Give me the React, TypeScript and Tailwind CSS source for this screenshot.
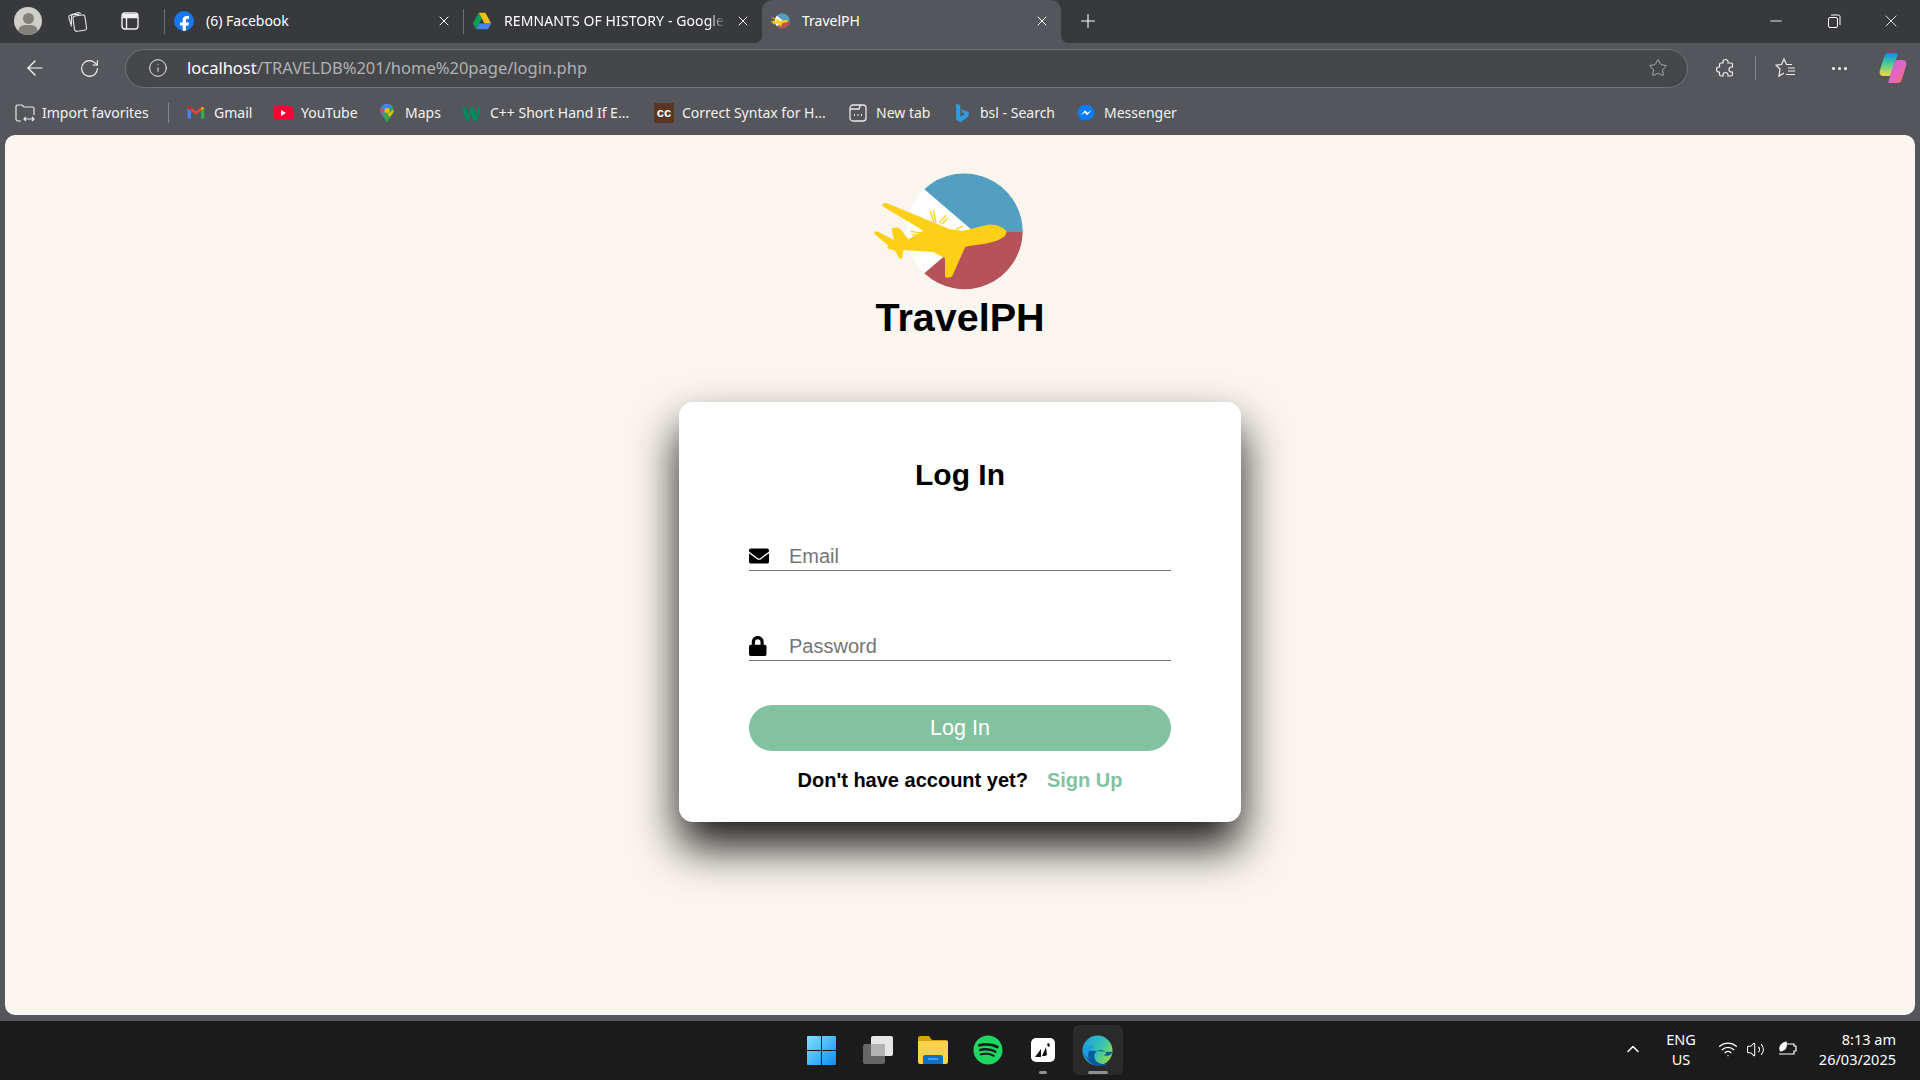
import React from 'react';
import { ArrowLeft, RotateCw, Info, Star, X, Plus, Minus, Wifi, Volume2, ChevronUp } from 'lucide-react';
import { FaEnvelope, FaLock, FaSpotify, FaFacebookF } from 'react-icons/fa';

const Logo = ({ className, viewBox }: { className: string; viewBox: string }) => (
  <svg className={className} viewBox={viewBox}>
    <path d="M253 88 A175 175 0 0 0 253 340 L400 214 Z" fill="#ffffff" />
    <path d="M253 88 A175 175 0 0 1 548 214 L400 214 Z" fill="#529fc1" />
    <path d="M548 214 A175 175 0 0 1 253 340 L400 214 Z" fill="#b5525a" />
    <g stroke="#fdd017" strokeWidth="4">
      <path d="M270 152 L282 190 M280 150 L288 190" />
      <path d="M298 188 L318 166 M306 192 L324 174" />
      <path d="M212 214 L250 220 M214 224 L250 228" />
      <path d="M348 208 L368 198" />
    </g>
    <path
      d="M498 212 C490 204 470 192 445 194 C420 198 395 208 365 212 L330 208 L140 129 C130 128 125 133 128 139 L250 212 L205 238 L180 206 C172 200 156 202 155 208 L162 240 L115 215 C105 213 100 218 104 222 L146 258 L140 264 L165 272 L178 296 C184 298 190 292 188 284 L190 270 L280 276 L315 295 L315 350 C320 355 332 353 337 348 L376 260 C420 254 470 248 490 232 C498 226 500 218 498 212 Z"
      fill="#fdd017"
    />
  </svg>
);

const FacebookIcon = () => (
  <span className="w-5 h-5 rounded-full bg-[#1877f2] flex items-end justify-center overflow-hidden text-white">
    <FaFacebookF size={17} className="translate-y-[2px]" />
  </span>
);

const DriveIcon = () => (
  <svg className="w-5 h-5" viewBox="0 0 24 24">
    <path d="M8 2h8l7 13h-8z" fill="#fbbc04" />
    <path d="M8 2l4 7-7 13-4-7z" fill="#0f9d58" />
    <path d="M5 22l4-7h14l-4 7z" fill="#4285f4" />
  </svg>
);

const GmailIcon = () => (
  <svg className="w-5 h-5" viewBox="0 0 24 24">
    <path d="M2 6v13h4V9z" fill="#4285f4" />
    <path d="M22 6v13h-4V9z" fill="#34a853" />
    <path d="M2 6l10 8 10-8-2-2-8 6-8-6z" fill="#ea4335" />
    <path d="M18 5l4 1-4 3z" fill="#fbbc04" />
    <path d="M2 6l2-2 2 1v4z" fill="#c5221f" />
  </svg>
);

const YoutubeIcon = () => (
  <span className="w-5 h-[14px] rounded-[4px] bg-[#ff0033] flex items-center justify-center">
    <span className="w-0 h-0 border-y-[3px] border-y-transparent border-l-[5px] border-l-white" />
  </span>
);

const MapsIcon = () => (
  <svg className="w-5 h-5" viewBox="0 0 24 24">
    <path d="M12 1a8 8 0 0 0-8 8c0 5 4 7 8 14 4-7 8-9 8-14a8 8 0 0 0-8-8z" fill="#34a853" />
    <path d="M6 3.500A8 8 0 0 1 18 3.500L6 14.500A8 8 0 0 1 6 3.500z" fill="#4285f4" />
    <path d="M4.500 6L9 9 5 13c-1-1-1-5-.5-7z" fill="#ea4335" />
    <path d="M13 13l7-5c0 4-3 6-5 9z" fill="#fbbc04" />
    <circle cx="12" cy="9" r="3" fill="#fbbc04" />
  </svg>
);

const W3Icon = () => (
  <svg className="w-5 h-5" viewBox="0 0 24 24">
    <path d="M0 5h5l3 10 2-6-1-4h5l3 10 2-10h3l-4 17h-4l-3-9-3 9H5z" fill="#04895f" />
  </svg>
);

const CcIcon = () => (
  <span className="w-5 h-5 bg-[#5a3620] flex items-center justify-center text-white text-[13px] font-bold leading-none font-['Liberation_Sans',sans-serif]">
    cc
  </span>
);

const NewTabIcon = () => (
  <svg className="w-5 h-5" viewBox="0 0 20 20" fill="none" stroke="#e8e8e8" strokeWidth="1.300">
    <rect x="2" y="2" width="16" height="16" rx="3" />
    <path d="M2 6h9l1.500-4" />
    <path d="M6 12h1M9.500 12h1M13 12h1" strokeWidth="1.800" />
  </svg>
);

const BingIcon = () => (
  <svg className="w-5 h-5" viewBox="0 0 24 24">
    <path d="M5 1l5 1.500v14l6-3.500-3-1-2-4.500 9 3.200v5.300L10 23l-5-3z" fill="#2b9de8" />
  </svg>
);

const MessengerIcon = () => (
  <svg className="w-5 h-5" viewBox="0 0 24 24">
    <path d="M12 2C6 2 2 6.300 2 11.500c0 3 1.300 5.500 3.500 7.200V22l3.200-1.800c1 .3 2.100.4 3.300.4 6 0 10-4 10-9.100S18 2 12 2z" fill="#0a7cff" />
    <path d="M5.500 14.500L11 8.800l2.700 2.800 5-2.800-5.400 5.800-2.700-2.800z" fill="#ffffff" />
  </svg>
);

const ImportIcon = () => (
  <svg className="w-5 h-5" viewBox="0 0 20 20" fill="none" stroke="#e8e8e8" strokeWidth="1.200">
    <path d="M6 18H3a2 2 0 0 1-2-2V3.500A1.500 1.500 0 0 1 2.500 2H7l2 2h8.500A1.500 1.500 0 0 1 19 5.500V12" />
    <path d="M9 16h10M11 14l-2 2 2 2M17 14l2 2-2 2" />
  </svg>
);

const bookmarks = [
  { label: 'Gmail', icon: <GmailIcon />, width: 'w-[87px]' },
  { label: 'YouTube', icon: <YoutubeIcon />, width: 'w-[104px]' },
  { label: 'Maps', icon: <MapsIcon />, width: 'w-[85px]' },
  { label: 'C++ Short Hand If E...', icon: <W3Icon />, width: 'w-[192px]' },
  { label: 'Correct Syntax for H...', icon: <CcIcon />, width: 'w-[194px]' },
  { label: 'New tab', icon: <NewTabIcon />, width: 'w-[104px]' },
  { label: 'bsl - Search', icon: <BingIcon />, width: 'w-[124px]' },
  { label: 'Messenger', icon: <MessengerIcon />, width: 'w-[110px]' },
];

const Flare = ({ side }: { side: 'left' | 'right' }) =>
  side === 'left' ? (
    <span className="absolute -left-2 bottom-0 w-2 h-2 bg-[radial-gradient(circle_at_0_0,transparent_8px,#55565b_8.500px)]" />
  ) : (
    <span className="absolute -right-2 bottom-0 w-2 h-2 bg-[radial-gradient(circle_at_100%_0,transparent_8px,#55565b_8.500px)]" />
  );

const TabStrip = () => (
  <div className="h-[43px] bg-[#38393d] flex items-center text-[14px] text-white shrink-0">
    <div className="w-[164px] flex items-center pl-[14px] pb-[2px] shrink-0">
      <span className="w-[28px] h-[28px] rounded-full bg-[#cfcec9] overflow-hidden relative flex justify-center">
        <span className="absolute top-[6px] w-[11px] h-[11px] rounded-full bg-[#82817c]" />
        <span className="absolute top-[18px] w-[20px] h-[14px] rounded-full bg-[#82817c]" />
      </span>
      <svg className="w-[22px] h-[22px] ml-[24px]" viewBox="0 0 20 20" fill="none" stroke="#e4e4e4" strokeWidth="1">
        <rect x="7" y="5" width="11" height="14" rx="2" transform="rotate(-8 12 12)" />
        <path d="M5 15L2.500 6.500A2 2 0 0 1 4 4.500l7-2a2 2 0 0 1 2.300 1.300" />
        <path d="M5 13L5 6a2 2 0 0 1 2-2h5" />
      </svg>
      <svg className="w-5 h-5 ml-[32px]" viewBox="0 0 20 20" fill="none" stroke="#f0f0f0" strokeWidth="1.400">
        <rect x="2" y="2" width="16" height="16" rx="3" />
        <path d="M2 6.500h16M6.500 6.500V18" />
        <path d="M3 3h14v3H3z" fill="#f0f0f0" stroke="none" />
      </svg>
    </div>
    <div className="w-[299px] h-[25px] pb-[2px] flex items-center border-l border-[#6d6e72] shrink-0">
      <span className="ml-[9px] mr-[12px]">
        <FacebookIcon />
      </span>
      <span className="flex-1">(6) Facebook</span>
      <X size={16} strokeWidth={1.5} className="mr-[11px]" />
    </div>
    <div className="w-[299px] h-[25px] pb-[2px] flex items-center border-l border-[#6d6e72] shrink-0">
      <span className="ml-[8px] mr-[12px]">
        <DriveIcon />
      </span>
      <span className="flex-1 overflow-hidden whitespace-nowrap tracking-[0.1px] [mask-image:linear-gradient(to_right,black_92%,transparent)]">
        REMNANTS OF HISTORY - Google Drive
      </span>
      <X size={16} strokeWidth={1.5} className="ml-[9px] mr-[11px] shrink-0" />
    </div>
    <div className="relative w-[299px] h-full pb-[2px] bg-[#55565b] rounded-t-[10px] flex items-center shrink-0">
      <Flare side="left" />
      <Flare side="right" />
      <Logo className="w-[20px] h-[20px] ml-[8px] mr-[12px]" viewBox="90 30 460 370" />
      <span className="flex-1">TravelPH</span>
      <X size={16} strokeWidth={1.5} className="mr-[11px]" />
    </div>
    <Plus size={22} strokeWidth={1.2} className="ml-[16px] -translate-y-px" />
    <div className="ml-auto flex items-center pb-[2px]">
      <Minus size={18} strokeWidth={1.2} className="mr-[41px]" />
      <svg className="w-4 h-4 mr-[39px]" viewBox="0 0 16 16" fill="none" stroke="#ffffff" strokeWidth="1">
        <rect x="2.500" y="4.500" width="9" height="10" rx="1.500" />
        <path d="M5 2h7.500A1.500 1.500 0 0 1 14 3.500V12" />
      </svg>
      <X size={20} strokeWidth={1} className="mr-[19px]" />
    </div>
  </div>
);

const AddressBar = () => (
  <div className="h-[47px] flex items-center shrink-0 pt-[3px]">
    <ArrowLeft size={24} strokeWidth={1.2} className="text-white ml-[23px]" />
    <RotateCw size={21} strokeWidth={1.2} className="text-white ml-[32px]" />
    <div className="ml-[25px] w-[1563px] h-[39px] rounded-full bg-[#46474b] border-[1.5px] border-[#727377] flex items-center">
      <Info size={20} strokeWidth={1.2} className="text-[#e8e8e8] ml-[22px]" />
      <span className="ml-[19px] text-[16.500px] text-[#b0b1b4] flex-1">
        <span className="text-white">localhost</span>/TRAVELDB%201/home%20page/login.php
      </span>
      <Star size={20} strokeWidth={1.2} className="text-[#a9aaad] mr-[19px]" />
    </div>
    <svg className="w-5 h-5 ml-[27px]" viewBox="0 0 20 20" fill="none" stroke="#f0f0f0" strokeWidth="1.200">
      <path d="M8 4a2.500 2.500 0 0 1 5 0v1h3a1.500 1.500 0 0 1 1.500 1.500V9h-1a2.500 2.500 0 0 0 0 5h1v2.500A1.500 1.500 0 0 1 16 18h-3v-1a2.500 2.500 0 0 0-5 0v1H6a1.500 1.500 0 0 1-1.500-1.500V14H4a2.500 2.500 0 0 1 0-5h.5V6.500A1.500 1.500 0 0 1 6 5h2z" />
    </svg>
    <span className="w-px h-[24px] bg-[#85868a] ml-[20px]" />
    <svg className="w-[22px] h-[22px] ml-[19px]" viewBox="0 0 22 22" fill="none" stroke="#f0f0f0" strokeWidth="1.200">
      <path d="M17 7.500H11.500L9 2 6.500 7.500 1 8.200 5 12 4 19 9 16" />
      <path d="M13 11h7M13 14h7M11 17.500h9" />
    </svg>
    <span className="ml-[35px] flex gap-[3px]">
      <span className="w-[3px] h-[3px] rounded-full bg-white" />
      <span className="w-[3px] h-[3px] rounded-full bg-white" />
      <span className="w-[3px] h-[3px] rounded-full bg-white" />
    </span>
    <svg className="w-[28px] h-[32px] ml-[32px]" viewBox="0 0 28 32">
      <defs>
        <linearGradient id="copilotA" x1="0" y1="0" x2="0" y2="1">
          <stop offset="0" stopColor="#0b8ce9" />
          <stop offset="0.5" stopColor="#4fd08a" />
          <stop offset="1" stopColor="#f5d34f" />
        </linearGradient>
        <linearGradient id="copilotB" x1="0" y1="0" x2="1" y2="1">
          <stop offset="0" stopColor="#c35ce0" />
          <stop offset="0.6" stopColor="#e868b8" />
          <stop offset="1" stopColor="#f96a3e" />
        </linearGradient>
      </defs>
      <path d="M9 1h10l-6 20c-1 3-3 3-5 3H4c-3 0-4-3-3-6l4-13c1-3 2-4 4-4z" fill="url(#copilotA)" />
      <path d="M19 31H9l6-20c1-3 3-3 5-3h4c3 0 4 3 3 6l-4 13c-1 3-2 4-4 4z" fill="url(#copilotB)" />
    </svg>
  </div>
);

const BookmarksBar = () => (
  <div className="h-[45px] flex items-center text-[14px] text-[#f2f2f2] shrink-0 pl-[15px]">
    <div className="w-[153px] flex items-center gap-[7px] shrink-0">
      <ImportIcon />
      <span>Import favorites</span>
    </div>
    <span className="w-px h-[20px] bg-[#85868a] mr-[17px]" />
    {bookmarks.map((b) => (
      <div key={b.label} className={`${b.width} flex items-center gap-2 shrink-0 whitespace-nowrap`}>
        <span className="w-5 h-5 flex items-center justify-center">{b.icon}</span>
        <span>{b.label}</span>
      </div>
    ))}
  </div>
);

const LoginCard = () => (
  <div className="mt-[63px] w-[562px] h-[420px] bg-white rounded-[14px] shadow-[0_25px_45px_rgba(0,0,0,0.9)] px-[70px] pt-[56px]">
    <h2 className="h-[34px] text-[30px] leading-[34px] font-bold text-black text-center">Log In</h2>
    <div className="mt-[43px] h-[36px] pt-[6px] flex items-center border-b-[1.5px] border-[#757575]">
      <FaEnvelope size={20} className="text-black shrink-0" />
      <input
        placeholder="Email"
        className="ml-[20px] flex-1 text-[20px] outline-none bg-transparent placeholder:text-[#757575]"
      />
    </div>
    <div className="mt-[54px] h-[36px] pt-[6px] flex items-center border-b-[1.5px] border-[#757575]">
      <FaLock className="w-[17.500px] h-5 text-black shrink-0" />
      <input
        placeholder="Password"
        className="ml-[22.500px] flex-1 text-[20px] outline-none bg-transparent placeholder:text-[#757575]"
      />
    </div>
    <button className="mt-[44px] w-full h-[46px] rounded-full bg-[#83c2a0] text-white text-[21.500px]">Log In</button>
    <p className="mt-[17px] text-[20px] leading-[24px] font-bold text-black text-center">
      Don't have account yet?
      <a className="ml-[19px] text-[#83c2a0]">Sign Up</a>
    </p>
  </div>
);

const TaskSlot = ({ children, active, dot }: { children: React.ReactNode; active?: boolean; dot?: string }) => (
  <div className={`relative h-[50px] flex items-center justify-center rounded-md ${active ? 'w-[50px] mx-[2.500px] bg-[#2a2a2a]' : 'w-[55px]'}`}>
    {children}
    {dot && <span className={`absolute bottom-[1px] h-[3px] rounded-full bg-[#8f8f8f] ${dot}`} />}
  </div>
);

const Taskbar = () => (
  <div className="h-[59px] pb-[1px] bg-[#1b1b1b] grid grid-cols-[1fr_auto_1fr] items-center shrink-0 mt-[6px]">
    <div />
    <div className="flex items-center">
      <TaskSlot>
        <svg className="w-[29px] h-[29px] -translate-x-px" viewBox="0 0 29 29">
          <defs>
            <linearGradient id="winA" x1="0" y1="0" x2="1" y2="1">
              <stop offset="0" stopColor="#7fe3ff" />
              <stop offset="1" stopColor="#0f8cf0" />
            </linearGradient>
          </defs>
          <path d="M0 1a1 1 0 0 1 1-1h13v14H0zM15 0h13a1 1 0 0 1 1 1v13H15zM0 15h14v14H1a1 1 0 0 1-1-1zM15 15h14v13a1 1 0 0 1-1 1H15z" fill="url(#winA)" />
        </svg>
      </TaskSlot>
      <TaskSlot>
        <span className="relative w-[30px] h-[28px] block">
          <span className="absolute left-0 bottom-0 w-[22px] h-[20px] rounded-[2px] bg-[#666666]" />
          <span className="absolute right-0 top-0 w-[22px] h-[20px] rounded-[2px] bg-[#e6e6e6]" />
          <span className="absolute left-[8px] top-[8px] w-[14px] h-[12px] bg-[#b3b3b3]" />
        </span>
      </TaskSlot>
      <TaskSlot>
        <svg className="w-[30px] h-[28px]" viewBox="0 0 30 28">
          <path d="M0 2a2 2 0 0 1 2-2h9l3 4h14a2 2 0 0 1 2 2v4H0z" fill="#d9a305" />
          <path d="M0 5h30v21a2 2 0 0 1-2 2H2a2 2 0 0 1-2-2z" fill="#fcd24e" />
          <path d="M5 21a2 2 0 0 1 2-2h16a2 2 0 0 1 2 2v7H5z" fill="#0a73c9" />
          <path d="M10 23h10" stroke="#6fc0f0" strokeWidth="1.200" />
        </svg>
      </TaskSlot>
      <TaskSlot>
        <FaSpotify size={30} className="text-[#1ed760]" />
      </TaskSlot>
      <TaskSlot dot="w-[8px]">
        <span className="w-[24px] h-[24px] rounded-[5px] bg-white flex items-center justify-center">
          <svg className="w-[18px] h-[18px]" viewBox="0 0 18 18">
            <path d="M1 16L7 8v8zM8 15l4-9 1 8-2 1zM13 3l2-1 1 3-2 1z" fill="#111111" />
          </svg>
        </span>
      </TaskSlot>
      <TaskSlot active dot="w-[20px]">
        <svg className="w-[31px] h-[31px]" viewBox="0 0 31 31">
          <defs>
            <linearGradient id="edgeA" x1="0" y1="0" x2="1" y2="0.600">
              <stop offset="0" stopColor="#1b9de2" />
              <stop offset="0.6" stopColor="#35c1b5" />
              <stop offset="1" stopColor="#86d94f" />
            </linearGradient>
          </defs>
          <circle cx="15.500" cy="15.500" r="15" fill="url(#edgeA)" />
          <path d="M1 15C2 22 8 31 17 31c4 0 8-1 10-3-5 2-12 1-14-4-2-4 0-8 5-9 3 0 6 1 6 3 0 2-3 2-3 2 4 2 9 0 9-3" fill="#0c59a4" />
          <path d="M12 12c-5 2-7 7-5 12-3-2-6-6-6-10C3 10 8 9 12 12z" fill="#1b9de2" />
        </svg>
      </TaskSlot>
    </div>
    <div className="flex items-center justify-end pr-[24px] pb-[2px] text-white text-[14.500px] leading-[20px]">
      <ChevronUp size={20} strokeWidth={1.8} className="mr-[23px]" />
      <div className="text-center mr-[22px]">
        <div>ENG</div>
        <div>US</div>
      </div>
      <Wifi size={20} strokeWidth={1.6} className="mr-[8px]" />
      <Volume2 size={19} strokeWidth={1.3} className="mr-[13px]" />
      <svg className="w-5 h-5 mr-[21px]" viewBox="0 0 20 20" fill="none" stroke="#ffffff" strokeWidth="1.200">
        <path d="M8 5h8v2h2v5h-2v3H1" />
        <path d="M2 11c-1-4 2-7 6-8 1 4 0 8-5 9z" fill="#ffffff" />
      </svg>
      <div className="text-right">
        <div>8:13 am</div>
        <div>26/03/2025</div>
      </div>
    </div>
  </div>
);

const App = () => (
  <div className="w-[1920px] h-[1080px] bg-[#55565b] flex flex-col overflow-hidden font-['Noto_Sans',sans-serif]">
    <TabStrip />
    <AddressBar />
    <BookmarksBar />
    <main className="flex-1 mx-[5px] rounded-[10px] bg-[#faf5ef] flex flex-col items-center pt-[25px] font-['Liberation_Sans',Arial,sans-serif]">
      <Logo className="w-[240px] h-[135px]" viewBox="0 0 720 405" />
      <h1 className="h-[44px] text-[39.500px] leading-[44px] font-bold text-black">TravelPH</h1>
      <LoginCard />
    </main>
    <Taskbar />
  </div>
);

export default App;
